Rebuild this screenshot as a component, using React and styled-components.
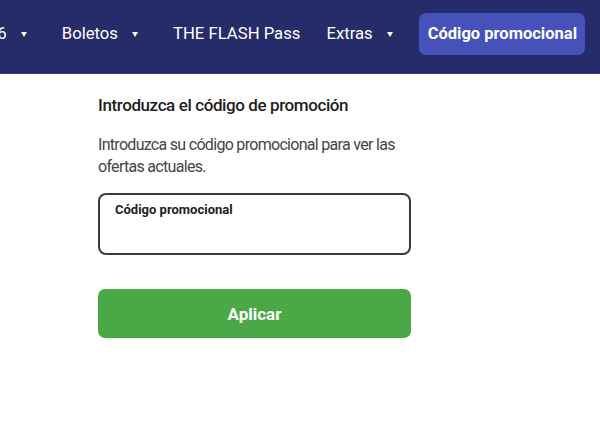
import React from 'react';
import styled, { createGlobalStyle } from 'styled-components';

const GlobalStyle = createGlobalStyle`
  html, body {
    margin: 0;
    padding: 0;
    background: #ffffff;
    font-family: Roboto, "Liberation Sans", sans-serif;
  }
  * {
    box-sizing: border-box;
  }
`;

const Page = styled.div`
  width: 600px;
  height: 430px;
  overflow: hidden;
  background: #fff;
`;

const NavBar = styled.nav`
  height: 74px;
  background: #262b69;
  border-bottom: 1px solid #363d86;
  display: flex;
  align-items: center;
  justify-content: flex-end;
  padding: 0 15px 6px 0;
  overflow: hidden;
`;

const NavItem = styled.div`
  flex-shrink: 0;
  display: flex;
  align-items: center;
  gap: 14px;
  padding: 0 13px;
  color: #fff;
  font-size: 16.7px;
  white-space: nowrap;
`;

const Caret = styled.span`
  width: 0;
  height: 0;
  margin-right: 9px;
  border-left: 3.5px solid transparent;
  border-right: 3.5px solid transparent;
  border-top: 5px solid #fff;
  margin-top: 1px;
`;

const PromoTab = styled.div`
  flex-shrink: 0;
  margin-left: 4px;
  height: 42px;
  padding: 0 8px 0 9px;
  display: flex;
  align-items: center;
  background: #4552b9;
  border-radius: 7px;
  color: #fff;
  font-size: 16.5px;
  font-weight: 700;
  white-space: nowrap;
`;

const Content = styled.main`
  width: 411px;
  padding: 20px 0 0 98px;
  color: #2b2b2b;
`;

const Title = styled.h1`
  margin: 0;
  font-size: 17px;
  font-weight: 500;
  letter-spacing: -0.4px;
  line-height: 22px;
  color: #1e1e1e;
`;

const Lead = styled.p`
  margin: 18px 0 0;
  font-size: 16px;
  letter-spacing: -0.7px;
  line-height: 22px;
  color: #454545;
`;

const Field = styled.label`
  margin-top: 15px;
  height: 62px;
  border: 2px solid #3b3b3b;
  border-radius: 8px;
  padding: 6px 15px;
  display: flex;
  flex-direction: column;
`;

const FieldLabel = styled.span`
  font-size: 13px;
  font-weight: 700;
  color: #222;
  line-height: 18px;
`;

const FieldInput = styled.input`
  border: 0;
  outline: none;
  background: transparent;
  font: inherit;
  font-size: 16px;
  padding: 4px 0 0;
`;

const ApplyButton = styled.button`
  display: block;
  margin-top: 34px;
  width: 100%;
  height: 49px;
  border: 0;
  border-radius: 7px;
  background: #4aa946;
  color: #fff;
  font-family: inherit;
  font-size: 17px;
  font-weight: 700;
`;

export default function App() {
  return (
    <Page>
      <GlobalStyle />
      <NavBar>
        <NavItem>
          2026 <Caret />
        </NavItem>
        <NavItem>
          Boletos <Caret />
        </NavItem>
        <NavItem>THE FLASH Pass</NavItem>
        <NavItem>
          Extras <Caret />
        </NavItem>
        <PromoTab>Código promocional</PromoTab>
      </NavBar>
      <Content>
        <Title>Introduzca el código de promoción</Title>
        <Lead>Introduzca su código promocional para ver las ofertas actuales.</Lead>
        <Field>
          <FieldLabel>Código promocional</FieldLabel>
          <FieldInput type="text" />
        </Field>
        <ApplyButton>Aplicar</ApplyButton>
      </Content>
    </Page>
  );
}
